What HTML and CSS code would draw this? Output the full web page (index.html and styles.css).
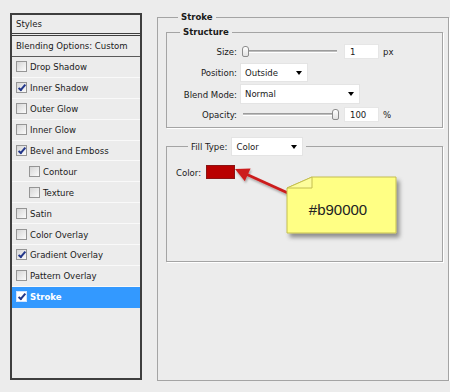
FILE: index.html
```html
<!DOCTYPE html>
<html lang="en">

<head>
    <meta charset="UTF-8">
    <title>Layer Style - Stroke</title>
    <link rel="stylesheet" href="styles.css">
</head>

<body>

<!-- Styles list -->
<div class="styles-panel">
    <div class="styles-head">Styles</div>
    <div class="styles-blend">Blending Options: Custom</div>
    <ul class="style-list">
        <li class="style-item"><span class="check"></span>Drop Shadow</li>
        <li class="style-item"><span class="check is-on"></span>Inner Shadow</li>
        <li class="style-item"><span class="check"></span>Outer Glow</li>
        <li class="style-item"><span class="check"></span>Inner Glow</li>
        <li class="style-item"><span class="check is-on"></span>Bevel and Emboss</li>
        <li class="style-item sub"><span class="check"></span>Contour</li>
        <li class="style-item sub"><span class="check"></span>Texture</li>
        <li class="style-item"><span class="check"></span>Satin</li>
        <li class="style-item"><span class="check"></span>Color Overlay</li>
        <li class="style-item"><span class="check is-on"></span>Gradient Overlay</li>
        <li class="style-item"><span class="check"></span>Pattern Overlay</li>
        <li class="style-item is-active"><span class="check is-on"></span>Stroke</li>
    </ul>
</div>

<!-- Stroke options -->
<fieldset class="group group-stroke">
    <legend class="legend-stroke">Stroke</legend>

    <fieldset class="group group-structure">
        <legend class="legend-structure">Structure</legend>
        <div class="structure-body">
            <div class="field-row">
                <span class="field-label">Size:</span>
                <div class="slider"><span class="slider-thumb thumb-min"></span></div>
                <span class="num-box">1</span>
                <span class="unit">px</span>
            </div>
            <div class="field-row">
                <span class="field-label">Position:</span>
                <span class="select select-position">Outside</span>
            </div>
            <div class="field-row">
                <span class="field-label">Blend Mode:</span>
                <span class="select select-blend">Normal</span>
            </div>
            <div class="field-row">
                <span class="field-label">Opacity:</span>
                <div class="slider"><span class="slider-thumb thumb-max"></span></div>
                <span class="num-box">100</span>
                <span class="unit">%</span>
            </div>
        </div>
    </fieldset>

    <fieldset class="group group-fill">
        <legend class="legend-fill">
            <span class="fill-label">Fill Type:</span>
            <span class="select select-fill">Color</span>
        </legend>
        <div class="fill-body">
            <div class="color-row">
                <span>Color:</span>
                <span class="swatch"></span>
            </div>

            <!-- callout note pointing at the swatch -->
            <svg class="callout" width="175" height="85" viewBox="0 0 175 85">
                <defs>
                    <filter id="noteShadow" x="-20%" y="-20%" width="150%" height="150%">
                        <feDropShadow dx="3" dy="4" stdDeviation="2" flood-color="#000" flood-opacity="0.4"/>
                    </filter>
                    <filter id="arrowShadow" x="-20%" y="-20%" width="150%" height="150%">
                        <feDropShadow dx="1" dy="2" stdDeviation="1" flood-color="#000" flood-opacity="0.3"/>
                    </filter>
                </defs>
                <g filter="url(#arrowShadow)">
                    <line x1="18" y1="14.5" x2="60" y2="33.5" stroke="#cc1e1e" stroke-width="3"/>
                    <polygon points="6,9 15.8,21.2 21.6,8.4" fill="#cc1e1e"/>
                </g>
                <polygon filter="url(#noteShadow)" points="83,17 167,17 167,73 58,73 58,28"
                         fill="#ffff84" stroke="#c4be50" stroke-width="1"/>
                <polygon points="58,28 83,17 83,28" fill="#fdfd9c" stroke="#c4be50" stroke-width="1"/>
                <text class="callout-text" x="109" y="55" text-anchor="middle">#b90000</text>
            </svg>
        </div>
    </fieldset>
</fieldset>

</body>

</html>
```

FILE: styles.css
```css
body {
    margin: 0;
    padding: 11px 0 0 10px;
    background-color: #ececec;
    font-family: "DejaVu Sans Condensed", "DejaVu Sans", sans-serif;
    font-size: 9.5px;
    color: #1a1a1a;
    display: flex;
    align-items: flex-start;
}

/* left list */
.styles-panel {
    box-sizing: border-box;
    width: 132px;
    height: 367px;
    margin-top: 2px;
    border: 2px solid #3e3e3e;
    background-color: #ececec;
}

.styles-head {
    height: 18px;
    line-height: 18px;
    padding-left: 4px;
    border-bottom: 3px double #3e3e3e;
}

.styles-blend {
    height: 20px;
    line-height: 20px;
    padding-left: 4px;
    border-bottom: 1px solid #5a5a5a;
}

.style-list {
    list-style: none;
    margin: 0;
    padding: 0;
}

.style-item {
    display: flex;
    align-items: center;
    gap: 3px;
    height: 19.9px;
    padding-left: 4px;
    border-bottom: 1px solid #f9f9f9;
}

.style-item.sub {
    padding-left: 17px;
}

.style-item.is-active {
    background-color: #3399ff;
    color: #fff;
    font-weight: bold;
    border-bottom-color: #3399ff;
}

.check {
    position: relative;
    box-sizing: border-box;
    width: 11px;
    height: 11px;
    border: 1px solid #959595;
    background: linear-gradient(135deg, #d6d6d6, #fbfbfb);
    flex-shrink: 0;
}

.is-active .check {
    background: #fff;
    border-color: #d0e4ff;
}

.check.is-on::after {
    content: "";
    position: absolute;
    left: 3px;
    top: 0;
    width: 2px;
    height: 6px;
    border: solid #23378a;
    border-width: 0 2px 2px 0;
    transform: rotate(40deg);
}

/* group boxes */
.group {
    margin: 0;
    border: 1px solid #a4a4a4;
    box-shadow: 1px 1px 0 #fff;
}

.group legend {
    line-height: 12px;
    padding: 0 3px;
    font-weight: bold;
}

.group-stroke {
    box-sizing: border-box;
    width: 292px;
    height: 370px;
    margin-left: 15px;
    padding: 0 5px 0 8px;
}

.legend-stroke {
    margin-left: 12px;
}

.group-structure {
    margin-top: 3px;
    padding: 3px 0 4px 0;
}

.legend-structure {
    margin-left: 13px;
}

.structure-body {
    display: grid;
    grid-template-rows: 20px 22px 22px 18px;
}

.field-row {
    display: flex;
    align-items: center;
}

.field-label {
    width: 70px;
    text-align: right;
}

.slider {
    position: relative;
    width: 94px;
    height: 1px;
    margin-left: 6px;
    background-color: #bdbdbd;
    border-top: 1px solid #9c9c9c;
    border-bottom: 1px solid #fff;
}

.slider-thumb {
    position: absolute;
    top: -5px;
    box-sizing: border-box;
    width: 7px;
    height: 11px;
    border: 1px solid #8c8c8c;
    border-radius: 3px 3px 2px 2px;
    background: linear-gradient(#ffffff, #e2e2e2);
}

.thumb-min {
    left: -1px;
}

.thumb-max {
    left: 89px;
}

.num-box {
    box-sizing: border-box;
    width: 35px;
    height: 15px;
    line-height: 13px;
    margin-left: 7px;
    padding-left: 5px;
    background-color: #fff;
    border: 1px solid #e6e6e6;
}

.unit {
    margin-left: 4px;
}

.select {
    position: relative;
    box-sizing: border-box;
    height: 19px;
    line-height: 17px;
    margin-left: 3px;
    padding-left: 4px;
    background-color: #fff;
    border: 1px solid #e4e4e4;
    font-weight: normal;
}

.select::after {
    content: "";
    position: absolute;
    right: 5px;
    top: 7px;
    border-left: 3.5px solid transparent;
    border-right: 3.5px solid transparent;
    border-top: 4px solid #000;
}

.select-position {
    width: 68px;
}

.select-blend {
    width: 120px;
    height: 20px;
    line-height: 18px;
}

.group-fill {
    margin-top: 9px;
    padding: 16px 0 0 9px;
}

.legend-fill {
    display: flex;
    align-items: center;
    margin-left: 12px;
    margin-bottom: -7px;
    font-weight: normal !important;
}

.fill-label {
    font-weight: normal;
}

.select-fill {
    width: 72px;
    margin-left: 4px;
}

.fill-body {
    position: relative;
    height: 96px;
}

.color-row {
    display: flex;
    align-items: center;
    gap: 5px;
}

.swatch {
    box-sizing: border-box;
    width: 29px;
    height: 14px;
    background-color: #b90000;
    border: 1px solid #8a1414;
}

.callout {
    position: absolute;
    left: 53px;
    top: -5px;
    overflow: visible;
}

.callout-text {
    font-family: "Liberation Sans", Arial, sans-serif;
    font-size: 15px;
    fill: #222;
}
```
